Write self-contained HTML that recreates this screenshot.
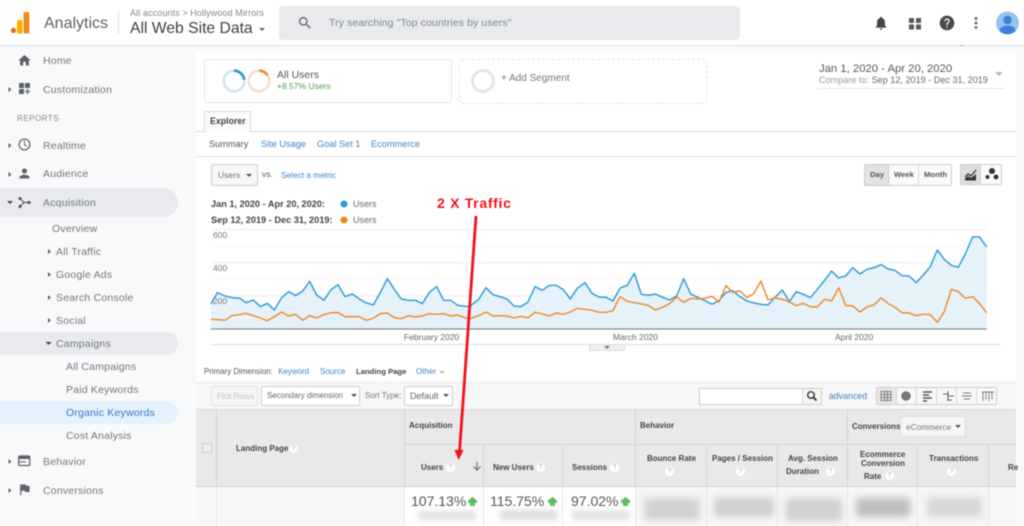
<!DOCTYPE html>
<html style="background:#f8f9fa"><head><meta charset="utf-8"><style>
html,body{margin:0;padding:0;width:1024px;height:526px;overflow:hidden;background:#f8f9fa}
#w{position:absolute;left:0;top:0;width:1024px;height:526px;overflow:hidden;background:#f8f9fa;filter:blur(.4px)}
body{position:relative;font-family:"Liberation Sans",sans-serif}
.t{position:absolute;white-space:nowrap;line-height:14px;height:14px}
.b{position:absolute;box-sizing:border-box}
.m{font-size:10.5px;color:#73777b;letter-spacing:.2px}
.l{color:#3f83c4}
.h{font-weight:bold;font-size:8px;color:#444}
.q{position:absolute;width:9px;height:9px;border-radius:50%;background:#fff;color:#aaa;font-size:7px;line-height:9px;text-align:center}
svg{position:absolute;overflow:visible}
.btn{position:absolute;box-sizing:border-box;border:1px solid #ccc;border-radius:2px;background:#f7f7f7}
.car{position:absolute;width:0;height:0;border-left:3px solid transparent;border-right:3px solid transparent;border-top:3px solid #555}
.bl{position:absolute;background:#cfcfcf;filter:blur(4px)}
</style></head><body><div id="w">
<!-- header -->
<div class="b" style="left:0;top:0;width:1024px;height:46px;background:#fff;border-bottom:1px solid #e2e3e5"></div>
<svg style="left:0;top:0" width="40" height="40"><circle cx="13.5" cy="30.5" r="2.7" fill="#e8710a"/><rect x="17" y="20" width="5.5" height="13.5" rx="1.5" fill="#f9ab00"/><rect x="23.5" y="12" width="5.8" height="21.5" rx="1.5" fill="#f08a1d"/></svg>
<div class="t" style="left:44px;top:16px;font-size:16px;line-height:16px;color:#5f6368">Analytics</div>
<div class="b" style="left:118px;top:12px;width:1px;height:22px;background:#dadce0"></div>
<div class="t" style="left:130px;top:6px;font-size:9px;color:#80868b;letter-spacing:.1px">All accounts &gt; Hollywood Mirrors</div>
<div class="t" style="left:130px;top:20px;font-size:15.7px;line-height:17px;height:17px;color:#3c4043">All Web Site Data</div>
<div class="car" style="left:259px;top:28px;border-left-width:3.5px;border-right-width:3.5px;border-top:3.5px solid #5f6368"></div>
<div class="b" style="left:279px;top:6px;width:461px;height:34px;background:#e8eaed;border-radius:4px"></div>
<svg style="left:297px;top:15px" width="16" height="16" viewBox="0 0 24 24"><path fill="#5f6368" d="M15.5 14h-.79l-.28-.27C15.41 12.59 16 11.11 16 9.5 16 5.91 13.09 3 9.5 3S3 5.91 3 9.5 5.91 16 9.5 16c1.61 0 3.09-.59 4.23-1.57l.27.28v.79l5 4.99L20.49 19l-4.99-5zm-6 0C7.01 14 5 11.99 5 9.5S7.01 5 9.5 5 14 7.01 14 9.5 11.99 14 9.5 14z"/></svg>
<div class="t" style="left:329px;top:16px;font-size:10.5px;color:#80868b;letter-spacing:.1px">Try searching "Top countries by users"</div>
<svg style="left:873px;top:15px" width="16" height="16" viewBox="0 0 24 24"><path fill="#454545" d="M12 22c1.1 0 2-.9 2-2h-4c0 1.1.9 2 2 2zm6-6v-5c0-3.07-1.63-5.64-4.5-6.32V4c0-.83-.67-1.5-1.5-1.5s-1.5.67-1.5 1.5v.68C7.64 5.36 6 7.92 6 11v5l-2 2v1h16v-1l-2-2z"/></svg>
<svg style="left:909px;top:17px" width="13" height="13"><rect x="0" y="1" width="5" height="5" fill="#5a5a5a"/><rect x="7" y="1" width="5" height="5" fill="#5a5a5a"/><rect x="0" y="7.5" width="5" height="5" fill="#5a5a5a"/><rect x="7" y="7.5" width="5" height="5" fill="#5a5a5a"/></svg>
<svg style="left:939px;top:15px" width="16" height="16" viewBox="0 0 24 24"><path fill="#4a4a4a" fill-rule="evenodd" d="M12 1a11 11 0 1 0 0 22 11 11 0 0 0 0-22zm1 18h-2v-2h2zm2.1-7.8l-.9.9c-.7.7-1.2 1.4-1.2 2.9h-2v-.5c0-1.1.5-2.1 1.2-2.8l1.2-1.3c.4-.3.6-.8.6-1.4a2 2 0 0 0-4 0H8a4 4 0 0 1 8 0c0 .9-.4 1.7-.9 2.2z"/></svg>
<svg style="left:973px;top:16px" width="6" height="14"><circle cx="3" cy="2.5" r="1.4" fill="#5a5a5a"/><circle cx="3" cy="7" r="1.4" fill="#5a5a5a"/><circle cx="3" cy="11.5" r="1.4" fill="#5a5a5a"/></svg>
<svg style="left:996px;top:11px" width="23" height="24" viewBox="0 0 23 24"><circle cx="11.5" cy="12" r="11.5" fill="#94c3ef"/><circle cx="11.5" cy="9" r="4.3" fill="#3f7fdc"/><path d="M3.5 20c.5-3.5 3.5-5.500 8-5.500s7.500 2 8 5.500a11.500 11.500 0 0 1-16 0z" fill="#3f7fdc"/></svg>

<!-- sidebar highlights -->
<div class="b" style="left:0;top:188px;width:178px;height:29px;background:#e8eaed;border-radius:0 15px 15px 0"></div>
<div class="b" style="left:0;top:332px;width:178px;height:23px;background:#e8eaed;border-radius:0 12px 12px 0"></div>
<div class="b" style="left:0;top:401px;width:178px;height:23px;background:#e4f2fb;border-radius:0 12px 12px 0"></div>

<svg style="left:17px;top:53px" width="15" height="15" viewBox="0 0 24 24"><path fill="#5f6368" d="M10 20v-6h4v6h5v-8h3L12 3 2 12h3v8z"/></svg>
<div class="t m" style="left:43px;top:54px">Home</div>
<svg style="left:19px;top:83px" width="11" height="12"><rect width="5" height="5" fill="#5f6368"/><rect x="6" width="5" height="5" fill="#5f6368"/><rect y="6" width="5" height="5" fill="#5f6368"/><path d="M6 8.500h5M8.500 6v5" stroke="#5f6368" stroke-width="1.300"/></svg>
<div class="t m" style="left:43px;top:83px">Customization</div>
<div class="t" style="left:17px;top:112px;font-size:8px;color:#80868b;letter-spacing:.5px">REPORTS</div>
<svg style="left:18px;top:138px" width="13" height="13"><circle cx="6.500" cy="6.500" r="5.400" fill="none" stroke="#5f6368" stroke-width="1.200"/><path d="M6.500 3v3.800l2.600 1.500" fill="none" stroke="#5f6368"/></svg>
<div class="t m" style="left:43px;top:139px">Realtime</div>
<svg style="left:17px;top:166px" width="15" height="15" viewBox="0 0 24 24"><path fill="#5f6368" d="M12 12c2.210 0 4-1.790 4-4s-1.790-4-4-4-4 1.790-4 4 1.790 4 4 4zm0 2c-2.670 0-8 1.340-8 4v2h16v-2c0-2.660-5.330-4-8-4z"/></svg>
<div class="t m" style="left:43px;top:167px">Audience</div>
<svg style="left:18px;top:196px" width="13" height="13"><path d="M2 2.500l4 4-4 4M6 6.500h5" fill="none" stroke="#4a4a4a" stroke-width="1"/><circle cx="2" cy="2.500" r="1.500" fill="#4a4a4a"/><circle cx="2" cy="10.500" r="1.500" fill="#4a4a4a"/><circle cx="11" cy="6.500" r="1.500" fill="#4a4a4a"/></svg>
<div class="t m" style="left:43px;top:196px">Acquisition</div>
<div class="t m" style="left:52px;top:222px">Overview</div>
<div class="t m" style="left:56px;top:245px">All Traffic</div>
<div class="t m" style="left:56px;top:268px">Google Ads</div>
<div class="t m" style="left:56px;top:291px">Search Console</div>
<div class="t m" style="left:56px;top:314px">Social</div>
<div class="t m" style="left:56px;top:337px">Campaigns</div>
<div class="t m" style="left:66px;top:360px">All Campaigns</div>
<div class="t m" style="left:66px;top:383px">Paid Keywords</div>
<div class="t m" style="left:66px;top:406px;color:#3a75c9">Organic Keywords</div>
<div class="t m" style="left:66px;top:429px">Cost Analysis</div>
<svg style="left:18px;top:455px" width="13" height="12"><rect x=".7" y="1" width="11" height="9.500" rx="1" fill="none" stroke="#5f6368" stroke-width="1.300"/><rect x="1" y="1" width="11" height="3" fill="#5f6368"/><path d="M1 6.800h7" stroke="#5f6368"/></svg>
<div class="t m" style="left:43px;top:455px">Behavior</div>
<svg style="left:17px;top:482px" width="15" height="15" viewBox="0 0 24 24"><path fill="#5f6368" d="M14.400 6L14 4H5v17h2v-7h5.600l.4 2h7V6z"/></svg>
<div class="t m" style="left:43px;top:484px">Conversions</div>
<!-- sidebar arrows -->
<svg style="left:0;top:0" width="60" height="500" fill="#5f6368">
<path d="M8.500 87l3 2.500-3 2.500zM8.500 143l3 2.500-3 2.500zM8.500 172l3 2.500-3 2.500zM8.500 459l3 2.500-3 2.500zM8.500 488l3 2.500-3 2.500zM48 249l3 2.500-3 2.500zM48 272l3 2.500-3 2.500zM48 295l3 2.500-3 2.500zM48 318l3 2.500-3 2.500z"/>
<path d="M7 201h6l-3 3zM45.500 342h6l-3 3z" fill="#444"/></svg>

<!-- main -->
<div class="b" style="left:196px;top:53px;width:820px;height:473px;background:#fff"></div>
<div class="b" style="left:204px;top:59px;width:248px;height:44px;border:1px solid #e6e6e6;border-radius:3px"></div>
<div class="b" style="left:459px;top:59px;width:248px;height:45px;border:1px dashed #e2e2e2;border-radius:3px"></div>
<svg style="left:196px;top:50px" width="300" height="60">
<circle cx="38" cy="31" r="10.300" fill="none" stroke="#cde4f4" stroke-width="2.700"/>
<path d="M38 20.700a10.300 10.300 0 0 1 10.200 9" fill="none" stroke="#2a9bd6" stroke-width="2.700"/>
<circle cx="63" cy="31" r="10.300" fill="none" stroke="#f2dfcf" stroke-width="2.700"/>
<path d="M63 20.700a10.300 10.300 0 0 1 8.500 4.600" fill="none" stroke="#ef8a25" stroke-width="2.700"/>
<circle cx="287" cy="31" r="10.500" fill="none" stroke="#e4e4e4" stroke-width="2.800"/>
</svg>
<div class="t" style="left:277px;top:68px;font-size:10.500px;color:#555">All Users</div>
<div class="t" style="left:277px;top:79px;font-size:8.500px;color:#4f9e50">+8.57% Users</div>
<div class="t" style="left:501px;top:71px;font-size:10px;color:#777;margin-top:1px">+ Add Segment</div>
<div class="t" style="left:819px;top:62px;font-size:11.300px;color:#555">Jan 1, 2020 - Apr 20, 2020</div>
<div class="t" style="left:819px;top:73px;font-size:9.100px;color:#999">Compare to: <span style="color:#666">Sep 12, 2019 - Dec 31, 2019</span></div>
<div class="b" style="left:817px;top:88px;width:188px;height:1px;background:#e4e4e4"></div>
<div class="car" style="left:995px;top:72px;border-left-width:4px;border-right-width:4px;border-top:4px solid #bbb"></div>
<div class="b" style="left:960px;top:45px;width:4px;height:1px;background:#7db3e6"></div>

<div class="b" style="left:196px;top:131px;width:820px;height:1px;background:#d8d8d8"></div>
<div class="b" style="left:204px;top:111px;width:47px;height:21px;background:#fbfbfb;border:1px solid #d8d8d8;border-bottom:0"></div>
<div class="t" style="left:210px;top:114px;font-size:8.800px;font-weight:bold;color:#444">Explorer</div>
<div class="t" style="left:209px;top:137px;font-size:9.200px;color:#555">Summary</div>
<div class="t l" style="left:261px;top:137px;font-size:9.200px">Site Usage</div>
<div class="t l" style="left:317px;top:137px;font-size:9.200px">Goal Set 1</div>
<div class="t l" style="left:371px;top:137px;font-size:9.200px">Ecommerce</div>
<div class="b" style="left:196px;top:156px;width:820px;height:1px;background:#dcdcdc"></div>

<div class="btn" style="left:211px;top:164px;width:47px;height:22px"></div>
<div class="t" style="left:218px;top:168px;font-size:8.500px;color:#777">Users</div>
<div class="car" style="left:246px;top:174px"></div>
<div class="t" style="left:262px;top:167px;font-size:8.500px;color:#555">vs.</div>
<div class="t l" style="left:281px;top:168px;font-size:8.300px">Select a metric</div>

<div class="t" style="left:211px;top:197px;font-size:9.200px;font-weight:bold;color:#444">Jan 1, 2020 - Apr 20, 2020:</div>
<div class="t" style="left:211px;top:213px;font-size:9.200px;font-weight:bold;color:#444">Sep 12, 2019 - Dec 31, 2019:</div>
<svg style="left:335px;top:195px" width="16" height="32"><circle cx="9" cy="9" r="3.500" fill="#2a9bd6"/><circle cx="9" cy="25" r="3.500" fill="#ef8a25"/></svg>
<div class="t" style="left:353px;top:197px;font-size:9px;color:#666">Users</div>
<div class="t" style="left:353px;top:213px;font-size:9px;color:#666">Users</div>

<div class="btn" style="left:864px;top:164px;width:88px;height:22px;background:#fafafa"></div>
<div class="b" style="left:864px;top:164px;width:25px;height:22px;background:#e2e2e2;border:1px solid #ccc;border-radius:2px"></div>
<div class="b" style="left:918px;top:165px;width:1px;height:20px;background:#d8d8d8"></div>
<div class="t" style="left:870px;top:168px;font-size:7.700px;font-weight:bold;color:#555">Day</div>
<div class="t" style="left:894px;top:168px;font-size:7.700px;font-weight:bold;color:#555">Week</div>
<div class="t" style="left:924px;top:168px;font-size:7.700px;font-weight:bold;color:#555">Month</div>
<div class="btn" style="left:960px;top:164px;width:42px;height:21px;background:#fafafa"></div>
<div class="b" style="left:960px;top:164px;width:21px;height:21px;background:#ddd;border:1px solid #ccc;border-radius:2px"></div>
<svg style="left:964px;top:168px" width="14" height="14"><path d="M1 9l3-3 3 2 5-6" fill="none" stroke="#333" stroke-width="1.300"/><path d="M1 12.500V10.500l3-2.500 3 2 5-4v6.500z" fill="#333"/></svg>
<svg style="left:984px;top:166px" width="16" height="16"><circle cx="8" cy="5" r="3" fill="#333"/><circle cx="3.500" cy="11" r="2" fill="#333"/><circle cx="12" cy="11" r="2.400" fill="#333"/></svg>

<!-- chart -->
<svg style="left:0;top:0" width="1024" height="526">
<g stroke="#ececec" stroke-width="1"><path d="M211 229.500H987M211 262.500H987M211 296H987"/></g>
<g stroke="#f6f6f6" stroke-width="1"><path d="M211 246H987M211 279H987M211 313H987"/></g>
<g transform="translate(200 160) scale(.3333)">
<polygon fill="#e6f2fa" points="33,507 33,432 52,398 75,408 97,413 120,415 138,428 160,420 181,440 202,430 223,450 245,413 266,395 287,407 308,393 329,364 350,405 372,421 393,389 414,374 435,410 457,402 478,417 499,429 520,435 541,398 562,356 583,388 604,417 625,421 646,421 667,431 688,397 710,380 731,421 752,421 773,436 794,439 810,439 836,418 858,383 879,404 900,410 921,417 942,438 963,440 984,426 1005,380 1027,391 1048,376 1069,376 1090,389 1111,417 1132,385 1155,368 1176,400 1197,411 1218,412 1239,423 1260,385 1260,507"/>
</g>
<g transform="translate(610 160) scale(.3333)">
<polygon fill="#e6f2fa" points="30,507 30,384 52,376 73,340 94,403 115,406 136,402 158,412 179,420 200,408 221,356 242,402 263,412 285,422 306,433 327,422 348,397 368,392 390,410 411,423 432,429 453,433 474,435 495,412 517,390 538,425 559,395 580,403 601,413 622,388 643,362 665,333 686,354 707,348 728,323 750,342 771,328 792,323 813,314 834,327 855,331 876,347 897,348 919,368 940,345 961,320 982,270 1003,298 1024,316 1045,322 1066,282 1088,231 1108,230 1130,261 1130,507"/>
</g>
<g transform="translate(200 160) scale(.3333)" fill="none" stroke-width="4.300" stroke-linejoin="round">
<polyline stroke="#2a9bd6" points="33,432 52,398 75,408 97,413 120,415 138,428 160,420 181,440 202,430 223,450 245,413 266,395 287,407 308,393 329,364 350,405 372,421 393,389 414,374 435,410 457,402 478,417 499,429 520,435 541,398 562,356 583,388 604,417 625,421 646,421 667,431 688,397 710,380 731,421 752,421 773,436 794,439 810,439 836,418 858,383 879,404 900,410 921,417 942,438 963,440 984,426 1005,380 1027,391 1048,376 1069,376 1090,389 1111,417 1132,385 1155,368 1176,400 1197,411 1218,412 1239,423 1260,385"/>
<polyline stroke="#ef8a25" points="33,478 54,479 75,481 96,467 117,464 138,460 160,467 181,474 202,482 223,470 245,456 266,468 287,463 308,481 329,467 350,474 372,464 393,458 414,458 435,470 457,470 478,470 499,481 520,475 541,461 562,459 583,473 604,476 625,467 646,471 667,468 688,461 710,463 731,461 752,468 773,465 794,473 810,476 836,467 858,456 879,468 900,467 921,468 942,474 963,469 984,474 1005,457 1027,462 1048,468 1069,459 1090,463 1111,456 1132,445 1155,448 1176,451 1197,457 1218,457 1239,452 1260,410"/>
</g>
<g transform="translate(610 160) scale(.3333)" fill="none" stroke-width="4.300" stroke-linejoin="round">
<polyline stroke="#2a9bd6" points="30,384 52,376 73,340 94,403 115,406 136,402 158,412 179,420 200,408 221,356 242,402 263,412 285,422 306,433 327,422 348,397 368,392 390,410 411,423 432,429 453,433 474,435 495,412 517,390 538,425 559,395 580,403 601,413 622,388 643,362 665,333 686,354 707,348 728,323 750,342 771,328 792,323 813,314 834,327 855,331 876,347 897,348 919,368 940,345 961,320 982,270 1003,298 1024,316 1045,322 1066,282 1088,231 1108,230 1130,261"/>
<polyline stroke="#ef8a25" points="30,410 52,424 73,428 94,432 115,436 136,450 158,442 179,431 200,411 221,427 242,415 263,417 285,415 306,409 327,426 348,377 368,397 390,393 411,413 432,400 453,363 474,420 495,414 517,418 538,426 559,437 580,430 601,440 622,441 643,418 665,423 686,383 707,436 728,438 750,456 771,441 792,435 813,414 834,430 855,442 876,458 897,459 919,467 940,463 961,464 982,487 1003,455 1024,388 1045,395 1066,415 1088,410 1108,430 1130,458"/>
</g>
<path d="M211 329H987" stroke="#8a8a8a" stroke-width="1.300"/>
<path d="M211 344.500H1001" stroke="#dcdcdc"/>
</svg>
<div class="t" style="left:213px;top:228px;font-size:8.500px;color:#777">600</div>
<div class="t" style="left:213px;top:261px;font-size:8.500px;color:#777">400</div>
<div class="t" style="left:213px;top:294px;font-size:8.500px;color:#777">200</div>
<div class="t" style="left:404px;top:330px;font-size:8.500px;color:#666">February 2020</div>
<div class="t" style="left:613px;top:330px;font-size:8.500px;color:#666">March 2020</div>
<div class="t" style="left:835px;top:330px;font-size:8.500px;color:#666">April 2020</div>
<div class="b" style="left:589px;top:345px;width:36px;height:6px;background:#efefef;border:1px solid #dedede;border-top:0"></div>
<div class="car" style="left:604px;top:346px;border-top-color:#777"></div>

<!-- primary dimension -->
<div class="t" style="left:204px;top:365px;font-size:7.900px;color:#555">Primary Dimension:</div>
<div class="t l" style="left:278px;top:365px;font-size:8px">Keyword</div>
<div class="t l" style="left:320px;top:365px;font-size:8px">Source</div>
<div class="t" style="left:356px;top:365px;font-size:7.700px;color:#444;font-weight:bold">Landing Page</div>
<div class="t l" style="left:416px;top:365px;font-size:8px">Other</div>
<div class="car" style="left:439px;top:371px;border-top-color:#bbb"></div>
<div class="b" style="left:196px;top:382px;width:820px;height:27px;background:#f7f7f7;border-top:1px solid #e8e8e8"></div>
<div class="btn" style="left:211px;top:386px;width:47px;height:20px;border-color:#e2e2e2;background:#f5f5f5"></div>
<div class="t" style="left:217px;top:389px;font-size:8.300px;color:#c4c4c4">Plot Rows</div>
<div class="btn" style="left:261px;top:386px;width:99px;height:20px;background:#fff"></div>
<div class="t" style="left:267px;top:389px;font-size:7.900px;color:#666">Secondary dimension</div>
<div class="car" style="left:351px;top:394px"></div>
<div class="t" style="left:365px;top:389px;font-size:8px;color:#777">Sort Type:</div>
<div class="btn" style="left:404px;top:386px;width:49px;height:20px;background:#fff"></div>
<div class="t" style="left:410px;top:389px;font-size:9px;color:#666">Default</div>
<div class="car" style="left:443px;top:394px"></div>
<div class="b" style="left:699px;top:388px;width:123px;height:17px;background:#fff;border:1px solid #ccc"></div>
<div class="b" style="left:802px;top:389px;width:19px;height:15px;background:#f5f5f5;border-left:1px solid #ddd"></div>
<svg style="left:806px;top:390px" width="12" height="12" viewBox="0 0 12 12"><circle cx="5" cy="5" r="3.300" fill="none" stroke="#444" stroke-width="1.500"/><path d="M7.500 7.500l3 3" stroke="#444" stroke-width="2"/></svg>
<div class="t l" style="left:829px;top:389px;font-size:8.800px">advanced</div>
<div class="b" style="left:876px;top:387px;width:121px;height:18px;background:#f8f8f8;border:1px solid #ccc;border-radius:2px"></div>
<div class="b" style="left:877px;top:388px;width:19px;height:16px;background:#e8e8e8"></div>
<div class="b" style="left:896px;top:388px;width:1px;height:16px;background:#d8d8d8"></div>
<div class="b" style="left:916px;top:388px;width:1px;height:16px;background:#d8d8d8"></div>
<div class="b" style="left:936px;top:388px;width:1px;height:16px;background:#d8d8d8"></div>
<div class="b" style="left:956px;top:388px;width:1px;height:16px;background:#d8d8d8"></div>
<div class="b" style="left:976px;top:388px;width:1px;height:16px;background:#d8d8d8"></div>
<svg style="left:876px;top:387px" width="121" height="18" fill="none" stroke="#666">
<path d="M5 4.500h10v9H5zM5 7.500h10M5 10.500h10M8.500 4.500v9M11.500 4.500v9" stroke-width=".8"/>
<circle cx="30" cy="9" r="4.800" fill="#777" stroke="none"/>
<path d="M47 5h9M47 8h6M47 11h9M47 14h4" stroke-width="1.500" stroke="#555"/>
<path d="M72 4v10M67 7h5M72 9h6M72 13h4" stroke-width="1.100"/>
<path d="M87 6h8M86 9h10M88 12h6" stroke-width="1.100" stroke="#777"/>
<path d="M106 5h12M107 5v9M110 5v8M113 5v9M116 5v7" stroke-width="1" stroke-dasharray="2 .6"/>
</svg>

<!-- table -->
<div class="b" style="left:196px;top:409px;width:820px;height:78px;background:#e9e9e9;border-top:1px solid #dcdcdc;border-bottom:1px solid #d4d4d4"></div>
<div class="b" style="left:196px;top:487px;width:208px;height:39px;background:#f7f7f7"></div>
<div class="b" style="left:636px;top:487px;width:380px;height:39px;background:#f7f7f7"></div>
<div class="b" style="left:216px;top:409px;width:1px;height:78px;background:#d4d4d4"></div>
<div class="b" style="left:404px;top:409px;width:1px;height:78px;background:#d4d4d4"></div>
<div class="b" style="left:404px;top:444px;width:612px;height:1px;background:#d4d4d4"></div>
<div class="b" style="left:483px;top:444px;width:1px;height:43px;background:#d4d4d4"></div>
<div class="b" style="left:562px;top:444px;width:1px;height:43px;background:#d4d4d4"></div>
<div class="b" style="left:635px;top:409px;width:1px;height:78px;background:#d4d4d4"></div>
<div class="b" style="left:706px;top:444px;width:1px;height:43px;background:#d4d4d4"></div>
<div class="b" style="left:777px;top:444px;width:1px;height:43px;background:#d4d4d4"></div>
<div class="b" style="left:847px;top:409px;width:1px;height:78px;background:#d4d4d4"></div>
<div class="b" style="left:917px;top:444px;width:1px;height:43px;background:#d4d4d4"></div>
<div class="b" style="left:988px;top:444px;width:1px;height:43px;background:#d4d4d4"></div>
<div class="b" style="left:216px;top:487px;width:1px;height:39px;background:#e6e6e6"></div>
<div class="b" style="left:404px;top:487px;width:1px;height:39px;background:#e6e6e6"></div>
<div class="b" style="left:483px;top:487px;width:1px;height:39px;background:#e6e6e6"></div>
<div class="b" style="left:562px;top:487px;width:1px;height:39px;background:#e6e6e6"></div>
<div class="b" style="left:635px;top:487px;width:1px;height:39px;background:#e6e6e6"></div>
<div class="b" style="left:706px;top:487px;width:1px;height:39px;background:#e6e6e6"></div>
<div class="b" style="left:777px;top:487px;width:1px;height:39px;background:#e6e6e6"></div>
<div class="b" style="left:847px;top:487px;width:1px;height:39px;background:#e6e6e6"></div>
<div class="b" style="left:917px;top:487px;width:1px;height:39px;background:#e6e6e6"></div>
<div class="b" style="left:988px;top:487px;width:1px;height:39px;background:#e6e6e6"></div>
<div class="b" style="left:202px;top:443px;width:10px;height:10px;background:#eee;border:1px solid #ccc"></div>
<div class="t h" style="left:236px;top:442px">Landing Page</div><div class="q" style="left:289px;top:444px">?</div>
<div class="t h" style="left:409px;top:419px">Acquisition</div>
<div class="t h" style="left:640px;top:419px">Behavior</div>
<div class="t h" style="left:852px;top:420px">Conversions</div>
<div class="b" style="left:900px;top:416px;width:66px;height:21px;background:#f6f6f6;border:1px solid #ddd;border-radius:2px"></div>
<div class="t" style="left:906px;top:420px;font-size:8.300px;color:#777">eCommerce</div>
<div class="car" style="left:955px;top:425px"></div>
<div class="t h" style="left:421px;top:461px">Users</div><div class="q" style="left:446px;top:463px">?</div>
<svg style="left:472px;top:461px" width="10" height="11"><path d="M5 1v8M1.500 5.500L5 9l3.500-3.500" fill="none" stroke="#666" stroke-width="1.100"/></svg>
<div class="t h" style="left:493px;top:461px">New Users</div><div class="q" style="left:536px;top:463px">?</div>
<div class="t h" style="left:572px;top:461px">Sessions</div><div class="q" style="left:610px;top:463px">?</div>
<div class="t h" style="left:647px;top:452px">Bounce Rate</div><div class="q" style="left:665px;top:467px">?</div>
<div class="t h" style="left:712px;top:452px">Pages / Session</div><div class="q" style="left:736px;top:467px">?</div>
<div class="t h" style="left:788px;top:452px">Avg. Session</div>
<div class="t h" style="left:786px;top:465px">Duration</div><div class="q" style="left:826px;top:467px">?</div>
<div class="t h" style="left:860px;top:448px">Ecommerce</div>
<div class="t h" style="left:861px;top:457px">Conversion</div>
<div class="t h" style="left:864px;top:470px">Rate</div><div class="q" style="left:885px;top:471px">?</div>
<div class="t h" style="left:929px;top:452px">Transactions</div><div class="q" style="left:947px;top:467px">?</div>
<div class="t h" style="left:1008px;top:461px">Re</div>

<div class="t" style="left:411px;top:494px;font-size:14px;color:#555">107.13%</div>
<div class="t" style="left:490px;top:494px;font-size:14px;color:#555">115.75%</div>
<div class="t" style="left:571px;top:494px;font-size:14px;color:#555">97.02%</div>
<svg style="left:0;top:492px" width="640" height="20" fill="#5cbf64"><path d="M468 11v-2.500L472.500 5l4.500 3.500V11h-2v3h-5v-3zM548 11v-2.500L552.500 5l4.500 3.500V11h-2v3h-5v-3zM621 11v-2.500L625.500 5l4.500 3.500V11h-2v3h-5v-3z"/></svg>
<div class="bl" style="left:418px;top:511px;width:58px;height:9px;background:#e2e2e2;filter:blur(3px)"></div>
<div class="bl" style="left:500px;top:510px;width:58px;height:10px;background:#dedede;filter:blur(3px)"></div>
<div class="bl" style="left:572px;top:510px;width:58px;height:10px;background:#e4e4e4;filter:blur(3px)"></div>
<div class="bl" style="left:645px;top:498px;width:54px;height:22px"></div>
<div class="bl" style="left:714px;top:497px;width:60px;height:20px"></div>
<div class="bl" style="left:786px;top:498px;width:56px;height:23px"></div>
<div class="bl" style="left:856px;top:498px;width:54px;height:19px;background:#bdbdbd"></div>
<div class="bl" style="left:927px;top:497px;width:55px;height:20px;background:#d6d6d6"></div>

<!-- annotation -->
<div class="t" style="left:437px;top:195px;font-size:14px;line-height:16px;height:16px;font-weight:bold;color:#f5101a;letter-spacing:.7px">2 X Traffic</div>
<svg style="left:0;top:0" width="1024" height="526"><path d="M476 216L459.500 452" stroke="#f5101a" stroke-width="2.800" fill="none"/><path d="M454.500 450L458.700 460 463.500 450z" fill="#f5101a"/></svg>
</div></body></html>
